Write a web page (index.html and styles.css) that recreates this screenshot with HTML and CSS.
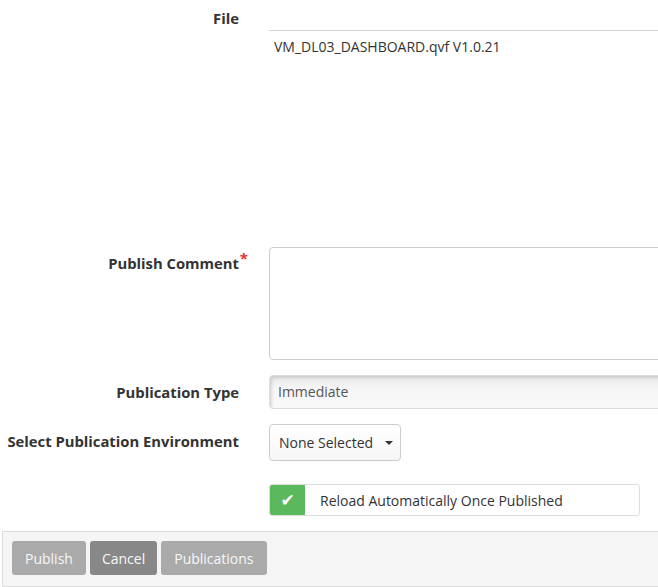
FILE: index.html
```html
<!DOCTYPE html>
<html>
<head>
<meta charset="utf-8">
<link rel="stylesheet" href="styles.css">
</head>
<body>
<div class="form">
  <div class="row row-file">
    <div class="label">File</div>
    <div class="field">
      <div class="file-table">
        <div class="file-head"></div>
        <div class="file-value">VM_DL03_DASHBOARD.qvf V1.0.21</div>
      </div>
    </div>
  </div>

  <div class="row row-comment">
    <div class="label label-comment">Publish Comment<span class="req">*</span></div>
    <div class="field"><textarea class="comment"></textarea></div>
  </div>

  <div class="row row-type">
    <div class="label">Publication Type</div>
    <div class="field"><div class="readonly">Immediate</div></div>
  </div>

  <div class="row row-env">
    <div class="label label-env">Select Publication Environment</div>
    <div class="field">
      <button class="dropdown">None Selected <span class="caret"></span></button>
    </div>
  </div>

  <div class="row row-check">
    <div class="label"></div>
    <div class="field">
      <div class="check">
        <span class="check-box">&#10004;</span>
        <span class="check-text">Reload Automatically Once Published</span>
      </div>
    </div>
  </div>

  <div class="footer">
    <button class="btn">Publish</button>
    <button class="btn btn-dark">Cancel</button>
    <button class="btn">Publications</button>
  </div>
</div>
</body>
</html>
```

FILE: styles.css
```css
html, body {
  margin: 0;
  padding: 0;
  background: #fff;
  overflow: hidden;
}
body {
  font-family: "Open Sans", "Liberation Sans", sans-serif;
  font-size: 14px;
  color: #333;
  width: 658px;
  height: 587px;
}
.form {
  width: 658px;
  overflow: hidden;
}
.row {
  display: grid;
  grid-template-columns: 239px 1fr;
  column-gap: 30px;
}
.label {
  font-weight: 700;
  font-size: 14.8px;
  text-align: right;
  line-height: 20px;
  color: #333;
  white-space: nowrap;
}
.field {
  min-width: 0;
}
.row-file .label {
  padding-top: 8px;
}
.file-head {
  height: 30px;
  border-bottom: 1px solid #d4d4d4;
}
.file-value {
  padding: 6px 0 0 5px;
  line-height: 20px;
  height: 210px;
}
.label-comment {
  padding-top: 6px;
  position: relative;
}
.req {
  color: #e0352b;
  position: absolute;
  right: -9px;
  top: 1px;
  font-size: 15px;
}
.comment {
  display: block;
  box-sizing: border-box;
  width: 430px;
  height: 113px;
  border: 1px solid #ccc;
  border-radius: 4px;
  resize: none;
  margin: 0;
  font-family: inherit;
}
.row-type {
  margin-top: 15px;
  align-items: center;
}
.readonly {
  box-sizing: border-box;
  width: 430px;
  height: 34px;
  line-height: 32px;
  padding-left: 8px;
  border: 1px solid #ddd;
  border-radius: 4px;
  background: linear-gradient(#e9e9e9, #f6f6f6 40%, #f9f9f9);
  box-shadow: inset 2px 2px 3px rgba(0,0,0,0.12);
  color: #555;
}
.row-env {
  margin-top: 15px;
  align-items: center;
}
.label-env {
  margin-top: -3px;
}
.dropdown {
  box-sizing: border-box;
  height: 37px;
  width: 132px;
  padding: 0 0 0 9px;
  margin: 0;
  text-align: left;
  border: 1px solid #ccc;
  border-radius: 4px;
  background: linear-gradient(#fff, #f6f6f6);
  font-family: inherit;
  font-size: 14px;
  color: #333;
  display: flex;
  align-items: center;
}
.caret {
  display: inline-block;
  width: 0;
  height: 0;
  margin-left: 12px;
  border-left: 4px solid transparent;
  border-right: 4px solid transparent;
  border-top: 4px solid #333;
}
.row-check {
  margin-top: 23px;
}
.check {
  box-sizing: border-box;
  width: 371px;
  height: 32px;
  border: 1px solid #ddd;
  border-radius: 3px;
  display: flex;
  align-items: stretch;
  overflow: hidden;
}
.check-box {
  width: 35px;
  background: #5cb85c;
  color: #fff;
  display: flex;
  align-items: center;
  justify-content: center;
  font-size: 17px;
  font-family: "DejaVu Sans", sans-serif;
}
.check-text {
  display: flex;
  align-items: center;
  padding-left: 15px;
  color: #333;
}
.footer {
  margin: 15px 0 0 2px;
  box-sizing: border-box;
  height: 56px;
  border: 1px solid #ddd;
  border-right: none;
  background: #f5f5f5;
  padding: 9px 0 0 9px;
  display: flex;
  gap: 4px;
  align-items: flex-start;
}
.btn {
  height: 34px;
  margin: 0;
  padding: 0 13px;
  border: none;
  border-radius: 3px;
  background: #aaa;
  color: #f7f7f7;
  font-family: inherit;
  font-size: 14px;
}
.btn-dark {
  background: #888;
  padding: 0 12px;
}
```
